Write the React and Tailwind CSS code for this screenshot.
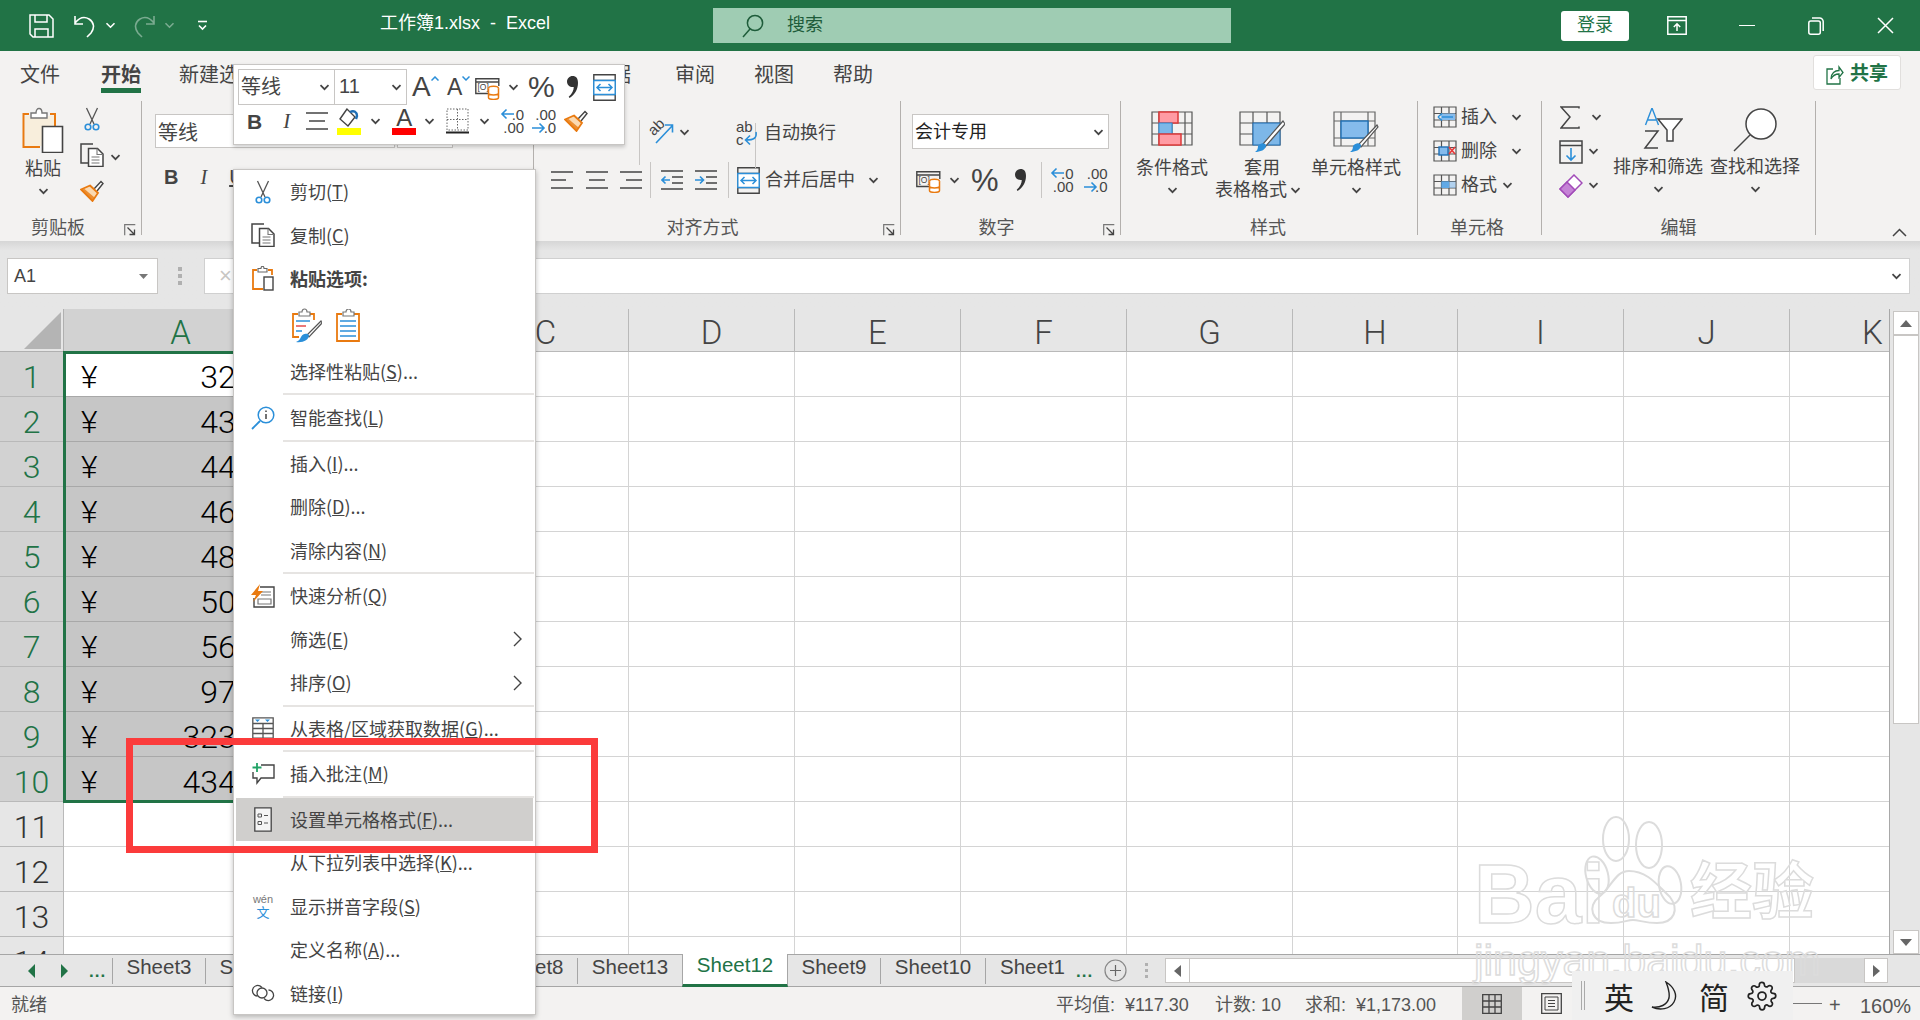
import React from "react";

const BLUE = "#2b8fd9";
const ORANGE = "#e97a10";

const Chev = ({ className = "" }) => (
  <svg width="11" height="7" viewBox="0 0 11 7" className={"shrink-0 " + className}>
    <path d="M1.5 1.2 5.5 5.2 9.5 1.2" fill="none" stroke="#444" strokeWidth="1.7" />
  </svg>
);

const Box = ({ w, h, children, className = "", vb }) => (
  <svg width={w} height={h} viewBox={vb || `0 0 ${w} ${h}`} fill="none" className={"shrink-0 " + className}>
    {children}
  </svg>
);

/* ---- title bar ---- */
const SaveIcon = () => (
  <Box w={25} h={24}>
    <path d="M1 1h19l4 4v18H4l-3-3z" stroke="#fff" strokeWidth="1.5" />
    <path d="M6 1v7h12V1M6 23v-8h13v8" stroke="#fff" strokeWidth="1.5" />
  </Box>
);
const UndoIcon = ({ color = "#fff" }) => (
  <Box w={24} h={24}>
    <path d="M2 2v8h8M2 9c4-5 9-7 14-4 5 3 6 9 2 14l-4 4" stroke={color} strokeWidth="1.6" />
  </Box>
);
const QatMore = () => (
  <Box w={11} h={11}>
    <path d="M1 1.5h9" stroke="#fff" strokeWidth="1.6" />
    <path d="M2 5.5 5.5 9 9 5.5" stroke="#fff" strokeWidth="1.6" />
  </Box>
);
const SearchIcon = ({ color = "#1e5c3a" }) => (
  <Box w={22} h={24}>
    <circle cx="13" cy="9" r="7.6" stroke={color} strokeWidth="1.5" />
    <path d="M8 15 1 23" stroke={color} strokeWidth="1.5" />
  </Box>
);
const DisplayIcon = () => (
  <Box w={20} h={19}>
    <path d="M.8.8h18.4v17.4H.8zM.8 4.5h18.4" stroke="#fff" strokeWidth="1.5" />
    <path d="M10 15V8M6.8 11 10 7.8l3.2 3.2" stroke="#fff" strokeWidth="1.5" />
  </Box>
);
const MaxIcon = () => (
  <Box w={16} h={18}>
    <rect x=".8" y="4" width="11.5" height="13.2" rx="2" stroke="#fff" strokeWidth="1.5" />
    <path d="M4 1h7.5a3.5 3.5 0 0 1 3.7 3.5V14" stroke="#fff" strokeWidth="1.5" />
  </Box>
);
const ShareIcon = () => (
  <Box w={18} h={21}>
    <path d="M7 5H1v15h13v-6" stroke="#217346" strokeWidth="1.3" />
    <path d="M5 15c0-6 4-8.500 8-8.500V3l4 5.500-4 5V10c-3 0-6 1-8 5z" stroke="#217346" strokeWidth="1.3" />
  </Box>
);

/* ---- ribbon small icons ---- */
const PasteBig = () => (
  <Box w={42} h={46}>
    <path d="M7 7H1.500v33H18" stroke={ORANGE} strokeWidth="2" />
    <path d="M28 7h5v12" stroke={ORANGE} strokeWidth="2" />
    <path d="M3 9h5v2h18V9h6v10H20v20H3z" fill="#fde9c7" opacity=".5" />
    <path d="M9 6h5c0-6 6-6 6 0h5v5H9z" fill="#fff" stroke="#777" strokeWidth="1.400" />
    <path d="M20.500 19.500h20v26h-20z" fill="#fff" stroke="#444" strokeWidth="1.600" />
  </Box>
);
const Scissors = ({ w = 16, h = 24 }) => (
  <Box w={w} h={h} vb="0 0 16 24">
    <path d="M2.500 1 10 17M13.500 1 6 17" stroke="#555" strokeWidth="1.300" />
    <circle cx="4" cy="20" r="2.800" stroke={BLUE} strokeWidth="1.600" />
    <circle cx="12" cy="20" r="2.800" stroke={BLUE} strokeWidth="1.600" />
  </Box>
);
const CopyIcon = ({ w = 24, h = 24 }) => (
  <Box w={w} h={h} vb="0 0 24 24">
    <path d="M13 1H1v19h7" stroke="#444" strokeWidth="1.500" />
    <path d="M8.500 5.500h9l5.500 5.500v12.500H8.500z" fill="#fff" stroke="#444" strokeWidth="1.500" />
    <path d="M17 5.500v6h6M11.500 14h8M11.500 17h8M11.500 20h8" stroke="#777" strokeWidth="1.100" />
  </Box>
);
const BrushFmt = ({ w = 24, h = 22 }) => (
  <Box w={w} h={h} vb="0 0 24 22">
    <path d="M14 9 21 1.500l2 2L17 11" fill="#fff" stroke="#444" strokeWidth="1.400" />
    <path d="M10 5.500 18 13l-5.500 8L1 9.500z" fill="#fbd9b0" stroke={ORANGE} strokeWidth="1.800" />
    <path d="M1 9.500 12.500 21l2-3.500L4.500 9z" fill={ORANGE} opacity=".8" />
  </Box>
);
const Launcher = () => (
  <Box w={12} h={12}>
    <path d="M.7 11.300V.7h10.600" stroke="#777" strokeWidth="1.200" />
    <path d="M3.500 3.500 10 10M10.500 5.500v5h-5" stroke="#444" strokeWidth="1.300" />
  </Box>
);
const Lines = ({ w = 22, h = 18, kind = "c" }) => {
  const m = kind === "c" ? "M3 9h16" : kind === "l" ? "M0 9h15" : "M6 9h16";
  return (
    <Box w={w} h={h}>
      <path d={"M0 1h22M0 17h22"} stroke="#444" strokeWidth="1.500" />
      <path d={m} stroke="#444" strokeWidth="1.500" />
    </Box>
  );
};
const IndentIcon = ({ out }) => (
  <Box w={22} h={20}>
    <path d="M0 1h22M0 19h22M11 7h11M11 13h11" stroke="#444" strokeWidth="1.500" />
    <path d={out ? "M9 10H1M4.500 6.500 1 10l3.500 3.500" : "M0 10h8M5 6.500 8.500 10 5 13.500"} stroke={BLUE} strokeWidth="1.600" />
  </Box>
);
const MergeIcon = ({ w = 23, h = 27 }) => (
  <Box w={w} h={h} vb="0 0 23 27">
    <path d="M.8.800h21.400v25.400H.8zM.8 6.500h21.400M.8 20.500h21.400" stroke="#444" strokeWidth="1.400" />
    <path d="M.8 6.500h21.400v14H.8z" stroke={BLUE} strokeWidth="1.400" fill="#fff" />
    <path d="M4 13.500h15M7.500 10 4 13.500 7.500 17M15.500 10l3.500 3.500-3.500 3.500" stroke={BLUE} strokeWidth="1.500" />
  </Box>
);
const Accounting = () => (
  <Box w={25} h={25}>
    <path d="M.8 3.800h23V7H.8zM.8 7v11.500h13M23.800 7v4" stroke="#444" strokeWidth="1.400" />
    <text x="2.500" y="15" fontSize="8.500" fill="#444" fontFamily="Liberation Sans">[O]</text>
    <ellipse cx="18.500" cy="13.500" rx="5" ry="2.200" fill="#fff" stroke={ORANGE} strokeWidth="1.500" />
    <path d="M13.500 13.500v9c0 2.500 10 2.500 10 0v-9M13.500 18c0 2.500 10 2.500 10 0" fill="#fff" stroke={ORANGE} strokeWidth="1.500" />
  </Box>
);
const Comma = ({ w = 11, h = 24 }) => (
  <Box w={w} h={h} vb="0 0 13 26">
    <path d="M6.500 0C11 0 13 3 13 8c0 8-4 14-10 18l-1-1.500C6 21 8 17 8 13 3.500 13.500 0 11 0 6.500 0 3 3 0 6.500 0z" fill="#333" />
  </Box>
);
const IncDec = ({ dec }) => (
  <div className="relative w-[24px] h-[26px] text-[15px] leading-[13px] text-[#444] font-['Liberation_Sans',sans-serif] shrink-0">
    {dec ? (
      <>
        <div className="text-right">.00</div>
        <div className="text-right">.0</div>
        <svg width="14" height="12" viewBox="0 0 14 12" className="absolute left-0 top-[14px]" fill="none">
          <path d="M0 6h12M7.500 1.500 12 6l-4.500 4.500" stroke={BLUE} strokeWidth="1.600" />
        </svg>
      </>
    ) : (
      <>
        <div className="text-right">.0</div>
        <div className="text-right">.00</div>
        <svg width="14" height="12" viewBox="0 0 14 12" className="absolute left-0 top-0" fill="none">
          <path d="M14 6H2M6.500 1.500 2 6l4.500 4.500" stroke={BLUE} strokeWidth="1.600" />
        </svg>
      </>
    )}
  </div>
);
const FillColor = () => (
  <Box w={25} h={28}>
    <path d="M10 2 3 12l8 7 7-9z" fill="#fff" stroke="#444" strokeWidth="1.400" />
    <path d="M13 5c4-2 7 0 7 4l-1 3" stroke="#1f6fb5" strokeWidth="2.400" />
    <rect y="21" width="24" height="7" fill="#ffff00" />
  </Box>
);
const FontColor = () => (
  <div className="w-[24px] h-[28px] flex flex-col items-center shrink-0">
    <span className="text-[24px] leading-[21px] text-[#444] font-['Liberation_Sans',sans-serif]">A</span>
    <span className="w-[24px] h-[7px] bg-[#ff0000]" />
  </div>
);
const BorderIcon = () => (
  <Box w={23} h={26}>
    <path d="M1 1h21v21H1zM11.500 1v21M1 11.500h21" stroke="#666" strokeWidth="1" strokeDasharray="1.500 1.500" />
    <path d="M0 24.500h23" stroke="#222" strokeWidth="2" />
  </Box>
);
const Orient = () => (
  <div className="relative w-[26px] h-[24px] shrink-0">
    <span className="absolute left-0 top-[-4px] text-[15px] text-[#444] rotate-[-45deg] font-['Liberation_Sans',sans-serif]">ab</span>
    <svg width="26" height="24" viewBox="0 0 26 24" fill="none" className="absolute left-0 top-0">
      <path d="M8 23 24 6M17 5h7.500v7.500" stroke={BLUE} strokeWidth="1.600" />
    </svg>
  </div>
);
const WrapIcon = () => (
  <div className="relative w-[22px] h-[27px] shrink-0 text-[15px] leading-[13px] text-[#444] font-['Liberation_Sans',sans-serif]">
    <div>ab</div>
    <div>c</div>
    <svg width="22" height="27" viewBox="0 0 22 27" fill="none" className="absolute left-0 top-0">
      <path d="M20 12c1 6-2 8-10 8M14 15.500 9.500 20l4.500 4.500" stroke={BLUE} strokeWidth="1.600" />
    </svg>
  </div>
);
const CondFmt = () => (
  <Box w={42} h={35}>
    <path d="M1 1h40v33H1zM1 12h40M1 23h40M8 1v33M34 1v33M21 1v33" stroke="#555" strokeWidth="1.200" />
    <rect x="8" y="1" width="19" height="11" fill="#ff9ba3" stroke="#dd3a3a" strokeWidth="1.500" />
    <rect x="8" y="12" width="13" height="11" fill="#7db7e8" stroke={BLUE} strokeWidth="1" />
    <rect x="8" y="23" width="22" height="11" fill="#ff9ba3" stroke="#dd3a3a" strokeWidth="1.500" />
  </Box>
);
const TableFmt = () => (
  <Box w={46} h={42}>
    <path d="M1 1h40v33H1zM1 12h40M1 23h40M14 1v33M28 1v33" stroke="#555" strokeWidth="1.200" />
    <rect x="14" y="12" width="27" height="22" fill="#7db7e8" stroke="#1f6fb5" strokeWidth="1" />
    <path d="M44 10 24 33l2 3L46 13z" fill="#fff" stroke="#555" strokeWidth="1.200" />
    <path d="M19 35c3-4 7-3 8-1 0 5-6 7-11 7 2-1 3-3 3-6z" fill={BLUE} />
  </Box>
);
const CellStyleIcon = () => (
  <Box w={46} h={42}>
    <path d="M1 1h41v34H1zM8 1v34M35 1v34M1 10h41M1 27h41" stroke="#666" strokeWidth="1.200" />
    <rect x="8" y="10" width="27" height="17" fill="#85bbec" stroke="#1f6fb5" strokeWidth="1.400" />
    <path d="M44 14 26 33l2 3 17-20z" fill="#fff" stroke="#555" strokeWidth="1.200" />
    <path d="M20 35c3-4 7-3 8-1 0 5-6 7-11 7 2-1 3-3 3-6z" fill={BLUE} />
  </Box>
);
const GridSmall = ({ children }) => (
  <Box w={24} h={22}>
    <path d="M1 1h22v20H1zM1 7.500h22M1 14h22M8.500 1v20M16 1v20" stroke="#555" strokeWidth="1.200" />
    {children}
  </Box>
);
const SortFilter = () => (
  <Box w={44} h={42}>
    <path d="M13 0 6.500 17M13 0l6.500 17M9 12h8" stroke={BLUE} strokeWidth="1.400" />
    <path d="M6 23h13L6 40h13" stroke="#444" strokeWidth="1.500" />
    <path d="M19 11h24l-9 11v11h-6V22z" fill="#fff" stroke="#444" strokeWidth="1.500" />
  </Box>
);
const FindBig = () => (
  <Box w={44} h={44}>
    <circle cx="28" cy="16" r="15" fill="#fff" stroke="#444" strokeWidth="1.500" />
    <path d="M17 27 1 43" stroke="#444" strokeWidth="1.500" />
  </Box>
);
const Eraser = () => (
  <Box w={24} h={24}>
    <path d="M15 1 23 9 9 23 1 15z" fill="#fff" stroke="#a14bb8" strokeWidth="1.500" />
    <path d="M8 8l8 8-7 7-8-8z" fill="#c583d6" stroke="#a14bb8" strokeWidth="1.500" />
  </Box>
);
const FillDown = () => (
  <Box w={24} h={24}>
    <path d="M1 1h22v22H1zM1 5.500h22" stroke="#444" strokeWidth="1.500" />
    <path d="M12 8v12M7.500 15.500 12 20l4.500-4.500" stroke={BLUE} strokeWidth="1.600" />
  </Box>
);
const Sigma = () => (
  <Box w={20} h={23}>
    <path d="M19 2.500V1H1l9 10L1 22h18v-1.500" stroke="#444" strokeWidth="1.500" />
  </Box>
);

/* ---- menu icons ---- */
const PasteOpt = () => (
  <Box w={22} h={25}>
    <path d="M5 4H1v19h10" stroke={ORANGE} strokeWidth="1.800" />
    <path d="M16 4h4v5" stroke={ORANGE} strokeWidth="1.800" />
    <path d="M6 2.500h3c0-3 3-3 3 0h3V6H6z" fill="#fff" stroke="#666" strokeWidth="1.100" />
    <rect x="12" y="11" width="9" height="13" fill="#fff" stroke="#444" strokeWidth="1.400" />
  </Box>
);
const PasteFmt = () => (
  <Box w={30} h={35}>
    <path d="M6 6h-5v23h6M18 6h4v6" stroke={ORANGE} strokeWidth="1.800" />
    <path d="M7 4h3c0-4 5-4 5 0h3v4H7z" fill="#fff" stroke="#777" strokeWidth="1.200" />
    <path d="M4 13h14" stroke={BLUE} strokeWidth="1.500" />
    <path d="M4 18h10" stroke="#e34b4b" strokeWidth="1.500" />
    <path d="M4 23h6" stroke={BLUE} strokeWidth="1.500" />
    <path d="M29 13 15 27l2 2L30 15z" fill="#fff" stroke="#555" strokeWidth="1.200" />
    <path d="M9 29c2-4 6-4 8-2 0 5-6 8-13 7 3-1 4-3 5-5z" fill={BLUE} />
  </Box>
);
const PasteList = () => (
  <Box w={24} h={33}>
    <path d="M6 5H1v27h22V5h-5" stroke={ORANGE} strokeWidth="1.800" />
    <path d="M7 3h3c0-4 5-4 5 0h3v4H7z" fill="#fff" stroke="#777" strokeWidth="1.200" />
    <path d="M4 12h16M4 17h16M4 22h16M4 27h16" stroke={BLUE} strokeWidth="1.500" />
  </Box>
);
const LookupIcon = () => (
  <Box w={24} h={24}>
    <circle cx="15" cy="9" r="7.800" stroke={BLUE} strokeWidth="1.500" />
    <path d="M9 15 1 23" stroke={BLUE} strokeWidth="1.800" />
    <path d="M15 8v5M15 4.500v1.600" stroke="#444" strokeWidth="1.500" />
  </Box>
);
const QuickIcon = () => (
  <Box w={24} h={24}>
    <path d="M9 3h14v20H3V14" stroke="#444" strokeWidth="1.400" />
    <path d="M10 8h10M10 11h10M7 15h13v5H7z" stroke="#777" strokeWidth="1.200" />
    <path d="M9 0 0 11h5l-3 7 10-11H7z" fill={ORANGE} />
  </Box>
);
const GetTable = () => (
  <Box w={22} h={22}>
    <path d="M.8.800h20.400v20.400H.8zM.8 6.500h20.400M.8 11.500h20.400M.8 16.500h20.400M11 6.500v14.700" stroke="#555" strokeWidth="1.300" />
    <path d="M3 2.500h5L5.500 5zM13 2.500h5L15.500 5z" fill={BLUE} />
  </Box>
);
const CommentIcon = () => (
  <Box w={23} h={22}>
    <path d="M9 2h13v13H9l-4 5v-5H1V9" stroke="#444" strokeWidth="1.400" />
    <path d="M5 0v9M.5 4.500h9" stroke="#21a366" strokeWidth="1.800" />
  </Box>
);
const FmtCells = () => (
  <Box w={18} h={25}>
    <path d="M.8.800h16.400v23.400H.8z" fill="#f5f5f5" stroke="#444" strokeWidth="1.300" />
    <path d="M4 7h3.500v3H4zM4 14.500h3.500v3H4z" stroke="#555" strokeWidth="1" />
    <path d="M10 8.500h4M10 16h4" stroke="#555" strokeWidth="1.200" />
  </Box>
);
const LinkIcon = () => (
  <Box w={24} h={18}>
    <path d="M11 3.500C9 1.500 6.500 1 4.500 2 1 3.500.5 8 3 10.500c1 1 2 1.500 3.500 1.500" stroke="#444" strokeWidth="1.300" />
    <path d="M13 14.500c2 2 4.500 2.500 6.500 1.500 3.500-1.500 4-6 1.500-8.500-1-1-2-1.500-3.500-1.500" stroke="#444" strokeWidth="1.300" />
    <circle cx="11" cy="9" r="5" stroke="#444" strokeWidth="1.300" />
  </Box>
);

/* ---- pieces ---- */
const MenuRow = ({ icon, arrow, active, children }) => (
  <div className={"h-[43.500px] flex items-center mx-[2px] " + (active ? "bg-[#d0cfcd]" : "")}>
    <div className="w-[54px] flex justify-center shrink-0">{icon}</div>
    <div className="text-[18px] text-[#444] leading-none -mt-[1px]">{children}</div>
    {arrow && (
      <svg width="9" height="16" viewBox="0 0 9 16" fill="none" className="ml-auto mr-[11px]">
        <path d="M1 1l7 7-7 7" stroke="#444" strokeWidth="1.400" />
      </svg>
    )}
  </div>
);
const Sep = ({ className = "" }) => <div className={"h-[2px] ml-[49px] mr-[1px] bg-[#e6e4e2] " + className} />;

const Group = ({ width, label, labelClass = "", launcher, children }) => (
  <div className={"relative h-[134px] border-r border-[#b3b0ad] shrink-0 " + width}>
    {children}
    {label && (
      <div className={"absolute top-[117px] left-0 right-0 text-center text-[18px] leading-[20px] text-[#555] " + labelClass}>
        {label}
      </div>
    )}
    {launcher && <div className="absolute right-[5px] top-[123px]"><Launcher /></div>}
  </div>
);
const BigBtn = ({ icon, lines, width }) => (
  <div className={"flex flex-col items-center shrink-0 " + width}>
    <div className="h-[46px] flex items-start">{icon}</div>
    {lines}
  </div>
);

const cols = ["A", "B", "C", "D", "E", "F", "G", "H", "I", "J", "K"];
const values = ["32.00", "43.00", "44.00", "46.00", "48.00", "50.00", "56.00", "97.00", "323.00", "434.00"];
const rows = Array.from({ length: 14 }, (_, i) => i + 1);

export default function App() {
  return (
    <div className="relative w-[1920px] h-[1020px] overflow-hidden bg-white font-['Liberation_Sans','Noto_Sans_CJK_SC',sans-serif]">
      {/* title bar */}
      <div className="h-[51px] bg-[#217346] flex items-center text-white">
        <div className="ml-[29px]"><SaveIcon /></div>
        <div className="ml-[19px]"><UndoIcon /></div>
        <svg width="11" height="7" viewBox="0 0 11 7" className="ml-[8px]"><path d="M1.500 1.200 5.500 5.200 9.500 1.200" fill="none" stroke="#fff" strokeWidth="1.600" /></svg>
        <div className="ml-[16px] scale-x-[-1] opacity-40"><UndoIcon /></div>
        <svg width="11" height="7" viewBox="0 0 11 7" className="ml-[8px] opacity-40"><path d="M1.500 1.200 5.500 5.200 9.500 1.200" fill="none" stroke="#fff" strokeWidth="1.600" /></svg>
        <div className="ml-[22px]"><QatMore /></div>
        <div className="ml-[172px] w-[170px] -mt-[5px] text-[18px] leading-none whitespace-nowrap">工作簿1.xlsx&nbsp; -&nbsp; Excel</div>
        <div className="ml-[163px] w-[518px] h-[35px] bg-[#9fccb3] flex items-center pl-[29px]">
          <SearchIcon />
          <span className="ml-[23px] text-[18px] text-[#1e5c3a]">搜索</span>
        </div>
        <div className="ml-[330px] w-[68px] h-[30px] bg-white rounded-[3px] text-[#217346] text-[18px] flex items-center justify-center">登录</div>
        <div className="ml-[38px]"><DisplayIcon /></div>
        <div className="ml-[52px] w-[16px] h-[1.500px] bg-white" />
        <div className="ml-[53px]"><MaxIcon /></div>
        <svg width="17" height="17" viewBox="0 0 17 17" fill="none" className="ml-[53px]"><path d="M1 1l15 15M16 1 1 16" stroke="#fff" strokeWidth="1.500" /></svg>
      </div>

      {/* ribbon tabs */}
      <div className="h-[49px] bg-[#f3f2f1] flex text-[20px] text-[#444] relative">
        <span className="ml-[20px] mt-[9px]">文件</span>
        <span className="ml-[41px] mt-[9px] font-bold relative">开始<span className="absolute left-0 right-0 top-[28px] h-[5px] bg-[#217346]" /></span>
        <span className="ml-[38px] mt-[9px]">新建选项卡</span>
        <span className="ml-[38px] mt-[9px]">插入</span>
        <span className="ml-[38px] mt-[9px]">页面布局</span>
        <span className="ml-[38px] mt-[9px]">公式</span>
        <span className="ml-[38px] mt-[9px]">数据</span>
        <span className="ml-[44px] mt-[9px]">审阅</span>
        <span className="ml-[39px] mt-[9px]">视图</span>
        <span className="ml-[39px] mt-[9px]">帮助</span>
        <div className="ml-auto mr-[19px] mt-[4px] w-[88px] h-[35px] bg-white border border-[#e1dfdd] rounded-[3px] flex items-center justify-center gap-[6px] pt-[3px]">
          <ShareIcon />
          <span className="text-[19px] font-bold text-[#217346]">共享</span>
        </div>
      </div>

      {/* ribbon */}
      <div className="h-[141px] bg-[#f3f2f1] flex pt-[1px] relative">
        <Group width="w-[142px]" label="剪贴板" labelClass="pr-[25px]" launcher>
          <div className="flex">
            <div className="ml-[8px] w-[70px] flex flex-col items-center pt-[6px]">
              <PasteBig />
              <span className="text-[18px] leading-[20px] mt-[6px] text-[#444]">粘贴</span>
              <Chev className="mt-[9px]" />
            </div>
            <div className="pt-[6px] w-[28px] flex flex-col items-center">
              <Scissors />
              <div className="mt-[12px]"><CopyIcon /></div>
              <div className="mt-[13px]"><BrushFmt /></div>
            </div>
            <Chev className="mt-[53px] ml-[4px]" />
          </div>
        </Group>

        <Group width="w-[392px]" label="字体">
          <div className="pl-[13px] pt-[13px] flex">
            <div className="w-[240px] h-[34px] pt-[4px] bg-white border border-[#c8c6c4] text-[20px] text-[#444] flex items-center pl-[2px] leading-none">等线</div>
            <div className="ml-[2px] w-[56px] h-[34px] bg-white border border-[#c8c6c4]" />
          </div>
          <div className="pl-[22px] pt-[19px] flex items-center text-[#444] gap-[22px]">
            <span className="font-bold text-[20px] leading-none">B</span>
            <span className="italic text-[20px] leading-none font-['Liberation_Serif',serif]">I</span>
            <span className="underline text-[20px] leading-none">U</span>
          </div>
        </Group>

        <Group width="w-[367px]" label="对齐方式" labelClass="pr-[29px]" launcher>
          <div className="pl-[16px] pt-[22px] flex items-start h-[64px]">
            <div className="w-[75px]" />
            <div className="ml-[14px] w-px h-[45px] -mt-[3px] bg-[#c8c6c4]" />
            <div className="ml-[8px] mt-[-3px]"><Orient /></div>
            <Chev className="ml-[5px] mt-[6px]" />
            <div className="ml-[29px] w-px h-[45px] -mt-[10px] bg-[#c8c6c4] absolute left-[192px] top-[32px]" />
            <div className="ml-[46px] flex items-center -mt-[3px]">
              <WrapIcon />
              <span className="ml-[6px] text-[18px] text-[#444]">自动换行</span>
            </div>
          </div>
          <div className="pl-[17px] flex items-center h-[30px]">
            <Lines kind="l" />
            <div className="ml-[13px]"><Lines /></div>
            <div className="ml-[12px]"><Lines kind="r" /></div>
            <div className="ml-[8px] w-px h-[36px] bg-[#c8c6c4]" />
            <div className="ml-[10px]"><IndentIcon out /></div>
            <div className="ml-[12px]"><IndentIcon /></div>
            <div className="ml-[11px] w-px h-[36px] bg-[#c8c6c4]" />
            <div className="ml-[8px]"><MergeIcon /></div>
            <span className="ml-[5px] text-[18px] text-[#444]">合并后居中</span>
            <Chev className="ml-[13px]" />
          </div>
        </Group>

        <Group width="w-[220px]" label="数字" labelClass="pr-[28px]" launcher>
          <div className="ml-[11px] mt-[13px] w-[197px] h-[35px] pt-[1px] bg-white border border-[#c8c6c4] flex items-center justify-between pl-[2px] pr-[4px] text-[18px] text-[#222]">
            会计专用<Chev />
          </div>
          <div className="pl-[15px] mt-[14px] flex items-center h-[34px]">
            <Accounting />
            <Chev className="ml-[8px]" />
            <span className="ml-[11px] text-[31px] leading-none text-[#444] font-light">%</span>
            <div className="ml-[16px]"><Comma /></div>
            <div className="ml-[15px] w-px h-[36px] bg-[#c8c6c4]" />
            <div className="ml-[8px]"><IncDec /></div>
            <div className="ml-[10px]"><IncDec dec /></div>
          </div>
        </Group>

        <Group width="w-[297px]" label="样式" labelClass="pr-[2px]">
          <div className="flex pt-[10px] text-[18px] leading-[22px] text-[#444] text-center">
            <BigBtn width="w-[90px] ml-[6px]" icon={<CondFmt />} lines={<><span>条件格式</span><Chev className="mt-[8px]" /></>} />
            <BigBtn width="w-[92px] ml-[-1px]" icon={<TableFmt />} lines={<><span>套用</span><span className="flex items-center whitespace-nowrap mr-[8px]">表格格式<Chev className="ml-[3px]" /></span></>} />
            <BigBtn width="w-[92px] ml-[2px]" icon={<CellStyleIcon />} lines={<><span className="whitespace-nowrap">单元格样式</span><Chev className="mt-[8px]" /></>} />
          </div>
        </Group>

        <Group width="w-[124px]" label="单元格" labelClass="pr-[5px]">
          <div className="pl-[15px] pt-[5px] flex flex-col gap-[12px] text-[18px] leading-none text-[#444]">
            <div className="flex items-center h-[22px]">
              <GridSmall><path d="M8 7.500h14V14H8z" fill="#85bbec" /><path d="M9 11h11M5 11l4-3.500M5 11l4 3.500" stroke={BLUE} strokeWidth="1.500" /></GridSmall>
              <span className="ml-[4px]">插入</span><Chev className="ml-[14px]" />
            </div>
            <div className="flex items-center h-[22px]">
              <GridSmall><rect x="6" y="7" width="9" height="8" fill="#85bbec" stroke="#1f6fb5" strokeWidth="1.400" /><path d="M16 7l6 7M22 7l-6 7" stroke="#e83b3b" strokeWidth="1.700" /></GridSmall>
              <span className="ml-[4px]">删除</span><Chev className="ml-[14px]" />
            </div>
            <div className="flex items-center h-[22px]">
              <GridSmall><rect x="8.500" y="7.500" width="7.500" height="6.500" fill={BLUE} /><rect x="8.500" y="7.500" width="14" height="6.500" fill="#85bbec" opacity=".6" /></GridSmall>
              <span className="ml-[4px]">格式</span><Chev className="ml-[5px]" />
            </div>
          </div>
        </Group>

        <Group width="w-[274px]" label="编辑">
          <div className="flex">
            <div className="pl-[17px] pt-[5px] w-[71px] flex flex-col gap-[11px]">
              <div className="flex items-center h-[23px]"><div className="ml-[1px]"><Sigma /></div><Chev className="ml-[11px]" /></div>
              <div className="flex items-center h-[23px]"><FillDown /><Chev className="ml-[5px]" /></div>
              <div className="flex items-center h-[23px]"><Eraser /><Chev className="ml-[5px]" /></div>
            </div>
            <div className="flex pt-[7px] text-[18px] leading-[22px] text-[#444]">
              <div className="w-[90px] flex flex-col items-center whitespace-nowrap">
                <div className="h-[48px] ml-[6px]"><SortFilter /></div>
                <span>排序和筛选</span>
                <Chev className="mt-[8px]" />
              </div>
              <div className="ml-[7px] w-[90px] flex flex-col items-center whitespace-nowrap">
                <div className="h-[48px]"><FindBig /></div>
                <span>查找和选择</span>
                <Chev className="mt-[8px]" />
              </div>
            </div>
          </div>
        </Group>

        <svg width="15" height="9" viewBox="0 0 15 9" fill="none" className="ml-[76px] mt-[127px]"><path d="M1 8l6.500-6.500L14 8" stroke="#444" strokeWidth="1.500" /></svg>
      </div>

      {/* formula bar */}
      <div className="h-[68px] bg-[#e6e6e6] relative flex items-start pt-[17px] pl-[7px] bg-linear-to-b from-[#d6d6d6] from-0% to-[#e6e6e6] to-[14%]">
        <div className="w-[151px] h-[36px] bg-white border border-[#c8c6c4] flex items-center justify-between pl-[6px] pr-[9px] text-[18px] text-[#444]">
          A1
          <svg width="9" height="5" viewBox="0 0 9 5"><path d="M0 0h9L4.500 5z" fill="#777" /></svg>
        </div>
        <div className="ml-[20px] mt-[9px] flex flex-col gap-[3px]">
          <span className="w-[4px] h-[4px] bg-[#b0b0b0]" /><span className="w-[4px] h-[4px] bg-[#b0b0b0]" /><span className="w-[4px] h-[4px] bg-[#b0b0b0]" />
        </div>
        <div className="ml-[22px] w-[1706px] h-[36px] bg-white border border-[#d0d0d0] flex items-center justify-between pl-[14px] pr-[7px]">
          <span className="text-[22px] text-[#c8c6c4] leading-none">×</span>
          <Chev />
        </div>
      </div>

      {/* sheet grid */}
      <div className="h-[645px] flex overflow-hidden">
        <div className="relative w-[1890px] overflow-hidden border-r border-[#a8a8a8] grid grid-cols-[64px_234px_165px_166px_166px_166px_166px_166px_165px_166px_166px_166px] grid-rows-[43px_repeat(14,45px)] shrink-0 text-[32px] leading-none font-['Roboto','Noto_Sans_CJK_SC',sans-serif] font-light">
          <div className="bg-[#e6e6e6] border-r border-b border-[#b0b0b0] flex justify-end items-end pr-[2px] pb-[2px]">
            <svg width="37" height="37" viewBox="0 0 37 37"><path d="M37 0v37H0z" fill="#b4b4b4" /></svg>
          </div>
          {cols.map((c) => (
            <div key={c} className={"flex items-center justify-center pt-[5px] border-r border-b border-[#b9b9b9] text-[33px] " + (c === "A" ? "bg-[#d2d2d2] text-[#217346]" : "bg-[#e6e6e6] text-[#444]")}>
              {c}
            </div>
          ))}
          {rows.map((r) => (
            <React.Fragment key={r}>
              <div className={"flex items-center justify-center pt-[5px] border-r border-b border-[#b9b9b9] " + (r <= 10 ? "bg-[#d2d2d2] text-[#217346]" : "bg-[#e6e6e6] text-[#333]")}>
                {r}
              </div>
              {cols.map((c) => (
                <div key={c} className={"border-r border-b flex items-center justify-between pt-[5px] text-black overflow-hidden pl-[17px] pr-[18px] " + (c === "A" && r <= 10 ? (r === 1 ? "bg-white border-[#a8a8a8]" : "bg-[#c6c6c6] border-[#a8a8a8]") : "bg-white border-[#d4d4d4]")}>
                  {c === "A" && r <= 10 && (
                    <>
                      <span>¥</span>
                      <span>{values[r - 1]}</span>
                    </>
                  )}
                </div>
              ))}
            </React.Fragment>
          ))}
          <div className="absolute left-[63px] top-[42px] w-[236px] h-[452px] border-[3px] border-[#217346] pointer-events-none" />
        </div>

        {/* vertical scrollbar */}
        <div className="w-[30px] bg-[#e6e6e6] flex flex-col items-center pl-[1px] relative">
          <div className="w-[26px] h-[24px] mt-[2px] bg-white border border-[#c8c6c4] flex items-center justify-center">
            <svg width="12" height="7" viewBox="0 0 12 7"><path d="M6 0l6 7H0z" fill="#666" /></svg>
          </div>
          <div className="w-[26px] h-[389px] bg-white border border-[#c8c6c4]" />
          <div className="w-[26px] h-[24px] mt-auto mb-[0px] bg-white border border-[#c8c6c4] flex items-center justify-center">
            <svg width="12" height="7" viewBox="0 0 12 7"><path d="M6 7l6-7H0z" fill="#666" /></svg>
          </div>
        </div>
      </div>

      {/* sheet tabs */}
      <div className="h-[33px] bg-[#e6e6e6] border-t border-b border-[#a6a6a6] flex items-center text-[20.500px] text-[#444] relative">
        <svg width="7" height="14" viewBox="0 0 7 14" className="ml-[28px]"><path d="M7 0v14L0 7z" fill="#217346" /></svg>
        <svg width="7" height="14" viewBox="0 0 7 14" className="ml-[26px]"><path d="M0 0v14l7-7z" fill="#217346" /></svg>
        <span className="ml-[21px] w-[23px] text-[#217346] font-bold tracking-[1px] text-[17px] leading-none mt-[2px]">...</span>
        {[
          ["Sheet3", "w-[93px]"],
          ["Sheet6", "w-[93px]"],
          ["Sheet5", "w-[93px]"],
          ["Sheet7", "w-[93px]"],
          ["Sheet8", "w-[93px]"],
          ["Sheet13", "w-[105px]"]
        ].map(([name, w]) => (
          <div key={name} className={"h-[26px] pb-[6px] border-l border-[#a6a6a6] flex items-center justify-center shrink-0 " + w}>{name}</div>
        ))}
        <div className="w-[106px] h-[33px] pb-[6px] -mt-[1px] bg-white border-x border-[#a6a6a6] border-b-[3px] border-b-[#217346] text-[#217346] flex items-center justify-center shrink-0">Sheet12</div>
        <div className="w-[92px] h-[26px] pb-[6px] flex items-center justify-center shrink-0">Sheet9</div>
        <div className="w-[106px] h-[26px] pb-[6px] border-x border-[#a6a6a6] flex items-center justify-center shrink-0">Sheet10</div>
        <span className="ml-[14px] -mt-[6px]">Sheet1</span>
        <span className="ml-[11px] text-[#217346] font-bold text-[17px] tracking-[1px] leading-none mt-[2px]">...</span>
        <svg width="23" height="23" viewBox="0 0 23 23" fill="none" className="ml-[11px]"><circle cx="11.500" cy="11.500" r="10.500" stroke="#888" strokeWidth="1.200" /><path d="M11.500 6v11M6 11.500h11" stroke="#666" strokeWidth="1.200" /></svg>
        <div className="ml-[18px] flex flex-col gap-[3px]">
          <span className="w-[3px] h-[3px] bg-[#b0b0b0]" /><span className="w-[3px] h-[3px] bg-[#b0b0b0]" /><span className="w-[3px] h-[3px] bg-[#b0b0b0]" />
        </div>
        <div className="ml-[17px] flex h-[25px] items-stretch">
          <div className="w-[25px] bg-white border border-[#c8c6c4] flex items-center justify-center"><svg width="7" height="12" viewBox="0 0 7 12"><path d="M7 0v12L0 6z" fill="#666" /></svg></div>
          <div className="w-[605px] bg-white border-y border-r border-[#c8c6c4]" />
          <div className="w-[69px] bg-[#d9d9d9]" />
          <div className="w-[24px] bg-white border border-[#c8c6c4] flex items-center justify-center"><svg width="7" height="12" viewBox="0 0 7 12"><path d="M0 0v12l7-6z" fill="#666" /></svg></div>
        </div>
      </div>

      {/* status bar */}
      <div className="h-[33px] bg-[#f3f2f1] flex items-center text-[18px] text-[#555] relative">
        <span className="ml-[11px] mt-[3px]">就绪</span>
        <span className="ml-[1009px] mt-[3px] w-[159px] whitespace-nowrap">平均值:&nbsp; ¥117.30</span>
        <span className="w-[90px] mt-[3px] whitespace-nowrap">计数: 10</span>
        <span className="whitespace-nowrap mt-[3px]">求和:&nbsp; ¥1,173.00</span>
        <div className="ml-[26px] w-[60px] h-[33px] bg-[#d0cfcd] flex items-center justify-center">
          <svg width="20" height="20" viewBox="0 0 20 20" fill="none"><path d="M.7.700h18.600v18.600H.7zM.7 7h18.600M.7 13h18.600M7 .7v18.600M13 .7v18.600" stroke="#444" strokeWidth="1.300" /></svg>
        </div>
        <svg width="21" height="21" viewBox="0 0 21 21" fill="none" className="ml-[19px]"><path d="M.7.700h19.600v19.600H.7z" stroke="#444" strokeWidth="1.300" /><path d="M4 4h13v13H4zM7 7.500h7M7 10.500h7M7 13.500h7" stroke="#444" strokeWidth="1" /></svg>
        <div className="absolute left-[1793px] top-[16px] w-[29px] h-px bg-[#777]" />
        <span className="absolute left-[1829px] top-[3px] text-[20px]">+</span>
        <span className="absolute left-[1860px] top-[4px] text-[20px]">160%</span>
      </div>

      {/* watermark */}
      <div className="absolute left-[1474px] top-[815px] w-[346px] h-[170px] pointer-events-none text-transparent [-webkit-text-stroke:1.500px_#dcdcdc] font-['Liberation_Sans','Noto_Sans_CJK_SC',sans-serif]">
        <svg width="346" height="115" viewBox="0 0 346 115" fill="none" className="absolute left-0 top-0">
          <ellipse cx="142" cy="24" rx="13" ry="22" stroke="#dcdcdc" strokeWidth="2" />
          <ellipse cx="175" cy="30" rx="13" ry="23" stroke="#dcdcdc" strokeWidth="2" />
          <ellipse cx="123" cy="60" rx="11" ry="19" stroke="#dcdcdc" strokeWidth="2" transform="rotate(-15 123 60)" />
          <ellipse cx="196" cy="70" rx="11" ry="19" stroke="#dcdcdc" strokeWidth="2" transform="rotate(-10 196 70)" />
          <path d="M155 56c-14 0-17 16-30 26-12 9-8 26 12 26 12 0 16-3 22-3s12 3 24 3c18 0 22-14 13-26-12-11-22-26-41-26z" stroke="#dcdcdc" strokeWidth="2" />
        </svg>
        <span className="absolute left-0 top-[37px] text-[84px] leading-none font-bold">Bai</span>
        <span className="absolute left-[138px] top-[68px] text-[40px] leading-none font-bold">du</span>
        <span className="absolute left-[216px] top-[47px] text-[62px] leading-none font-bold whitespace-nowrap">经验</span>
        <span className="absolute left-0 top-[124px] text-[43px] leading-none whitespace-nowrap">jingyan.baidu.com</span>
      </div>

      {/* IME bar */}
      <div className="absolute left-[1572px] top-[971px] w-[221px] h-[49px] bg-[#f0f0f0] flex items-center text-[#222]">
        <div className="ml-[9px] w-[4px] h-[29px] border-x border-[#aaa]" />
        <span className="ml-[19px] text-[30px] leading-none font-['Noto_Sans_CJK_SC',sans-serif]">英</span>
        <svg width="28" height="30" viewBox="0 0 28 30" fill="none" className="ml-[17px]"><path d="M15 1c8 5 12 13 8 20-4 7-14 9-22 5 8 1 15-2 17-9 1-6-1-11-3-16z" stroke="#222" strokeWidth="1.400" /></svg>
        <span className="ml-[20px] text-[30px] leading-none font-['Noto_Sans_CJK_SC',sans-serif]">简</span>
        <svg width="30" height="30" viewBox="0 0 24 24" fill="none" stroke="#222" strokeWidth="1.400" className="ml-[18px]"><circle cx="12" cy="12" r="3.200" /><path d="M19.400 15a1.650 1.650 0 0 0 .33 1.820l.06.06a2 2 0 1 1-2.830 2.830l-.06-.06a1.650 1.650 0 0 0-2.800 1.170V21a2 2 0 0 1-4 0v-.09a1.650 1.650 0 0 0-2.800-1.170l-.06.06a2 2 0 1 1-2.830-2.830l.06-.06a1.650 1.650 0 0 0-1.170-2.800H3a2 2 0 0 1 0-4h.09a1.650 1.650 0 0 0 1.170-2.800l-.06-.06a2 2 0 1 1 2.830-2.830l.06.06a1.650 1.650 0 0 0 2.800-1.170V3a2 2 0 0 1 4 0v.09a1.650 1.650 0 0 0 2.800 1.170l.06-.06a2 2 0 1 1 2.830 2.830l-.06.06a1.650 1.650 0 0 0 1.170 2.800H21a2 2 0 0 1 0 4h-.09a1.650 1.650 0 0 0-1.510 1z" /></svg>
      </div>

      {/* context menu */}
      <div className="absolute left-[233px] top-[169px] w-[303px] h-[846px] bg-white border border-[#c8c6c4] shadow-[0_2px_5px_rgba(0,0,0,0.25)] font-['Noto_Sans_CJK_SC',sans-serif]">
        <MenuRow icon={<Scissors />}>剪切(<u>T</u>)</MenuRow>
        <MenuRow icon={<CopyIcon />}>复制(<u>C</u>)</MenuRow>
        <MenuRow icon={<PasteOpt />}><b>粘贴选项:</b></MenuRow>
        <div className="h-[49px] flex items-center pl-[58px] gap-[14px]">
          <PasteFmt />
          <PasteList />
        </div>
        <MenuRow>选择性粘贴(<u>S</u>)...</MenuRow>
        <Sep className="mb-[1px]" />
        <MenuRow icon={<LookupIcon />}>智能查找(<u>L</u>)</MenuRow>
        <Sep />
        <MenuRow>插入(<u>I</u>)...</MenuRow>
        <MenuRow>删除(<u>D</u>)...</MenuRow>
        <MenuRow>清除内容(<u>N</u>)</MenuRow>
        <Sep />
        <MenuRow icon={<QuickIcon />}>快速分析(<u>Q</u>)</MenuRow>
        <MenuRow arrow>筛选(<u>E</u>)</MenuRow>
        <MenuRow arrow>排序(<u>O</u>)</MenuRow>
        <Sep />
        <MenuRow icon={<GetTable />}>从表格/区域获取数据(<u>G</u>)...</MenuRow>
        <Sep />
        <MenuRow icon={<CommentIcon />}>插入批注(<u>M</u>)</MenuRow>
        <Sep />
        <MenuRow icon={<FmtCells />} active>设置单元格格式(<u>F</u>)...</MenuRow>
        <MenuRow>从下拉列表中选择(<u>K</u>)...</MenuRow>
        <MenuRow icon={<div className="flex flex-col items-center leading-none"><span className="text-[11px] text-[#777] font-['Liberation_Sans',sans-serif]">wén</span><span className="text-[13px] text-[#2b8fd9]">文</span></div>}>显示拼音字段(<u>S</u>)</MenuRow>
        <MenuRow>定义名称(<u>A</u>)...</MenuRow>
        <MenuRow icon={<LinkIcon />}>链接(<u>I</u>)</MenuRow>
      </div>

      {/* mini toolbar */}
      <div className="absolute left-[233px] top-[64px] w-[392px] h-[81px] bg-white border border-[#c8c6c4] shadow-[0_2px_4px_rgba(0,0,0,0.2)] font-['Noto_Sans_CJK_SC',sans-serif]">
        <div className="flex items-center pl-[4px] pt-[4px]">
          <div className="w-[97px] h-[36px] pb-[3px] border border-[#c8c6c4] flex items-center justify-between pl-[2px] pr-[4px] text-[20px] text-[#444] leading-none">等线<Chev className="mt-[3px]" /></div>
          <div className="w-[72px] h-[36px] pb-[3px] border-y border-r border-[#c8c6c4] flex items-center justify-between pl-[4px] pr-[4px] text-[20px] text-[#444] leading-none font-['Liberation_Sans',sans-serif]">11<Chev className="mt-[3px]" /></div>
          <div className="ml-[5px] w-[24px] relative text-[28px] leading-none text-[#444] font-['Liberation_Sans',sans-serif] font-light">A
            <svg width="8" height="5" viewBox="0 0 8 5" fill="none" className="absolute left-[19px] top-[3px]"><path d="M.5 4.500 4 1l3.500 3.500" stroke={BLUE} strokeWidth="1.500" /></svg>
          </div>
          <div className="ml-[11px] w-[20px] relative text-[23px] leading-none text-[#444] font-['Liberation_Sans',sans-serif]">A
            <svg width="8" height="5" viewBox="0 0 8 5" fill="none" className="absolute left-[15px] top-0"><path d="M.5.5 4 4 7.500.5" stroke={BLUE} strokeWidth="1.500" /></svg>
          </div>
          <div className="ml-[8px]"><Accounting /></div>
          <Chev className="ml-[8px]" />
          <span className="ml-[9px] text-[30px] leading-none text-[#444] font-['Liberation_Sans',sans-serif] font-light">%</span>
          <div className="ml-[12px]"><Comma /></div>
          <div className="ml-[15px]"><MergeIcon /></div>
        </div>
        <div className="flex items-center pl-[13px] mt-[1px] h-[30px]">
          <span className="font-bold text-[21px] leading-none text-[#444] font-['Liberation_Sans',sans-serif]">B</span>
          <span className="ml-[21px] italic text-[21px] leading-none text-[#444] font-['Liberation_Serif',serif]">I</span>
          <div className="ml-[16px]"><Lines /></div>
          <div className="ml-[9px]"><FillColor /></div>
          <Chev className="ml-[8px]" />
          <div className="ml-[11px]"><FontColor /></div>
          <Chev className="ml-[8px]" />
          <div className="ml-[11px]"><BorderIcon /></div>
          <Chev className="ml-[10px]" />
          <div className="ml-[10px]"><IncDec /></div>
          <div className="ml-[8px]"><IncDec dec /></div>
          <div className="ml-[8px]"><BrushFmt /></div>
        </div>
      </div>

      {/* red annotation */}
      <div className="absolute left-[126px] top-[738px] w-[472px] h-[115px] border-[7px] border-[#fb3b3b] pointer-events-none" />
    </div>
  );
}
